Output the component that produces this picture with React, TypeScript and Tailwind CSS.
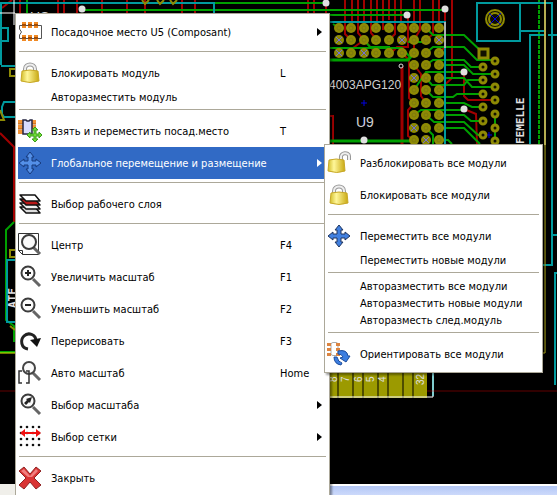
import type { ReactNode } from "react";

const GREEN = "#00a000";
const RED = "#a00000";
const CYAN = "#009a9e";
const OLIVE = "#8e8a04";

const gridCols = [339, 351, 364, 376, 389, 402, 414, 426, 439];
const gridRows = [28, 40, 53];
const sideRows = [65, 78, 90, 103, 115, 128, 140];
const connectorLeft = [67, 80, 94, 107, 121, 135];
const connectorRight = [61, 74, 87, 100, 114, 128, 141];
const crosses = [[339, 40], [339, 53], [364, 53], [402, 40], [439, 40], [414, 78], [414, 128], [426, 140]];
const vias = [[82, 9], [326, 3], [364, 140], [407, 15], [445, 9], [464, 72], [464, 109]];
const topRed = [20, 58, 64, 77, 102, 127, 145, 182, 195, 308, 314, 326, 345, 352, 358, 364, 371, 377, 383];

function Board() {
  return (
    <svg className="absolute left-0 top-0" width="557" height="484" viewBox="0 0 557 484" fill="none" aria-hidden="true">
      <g stroke={RED} strokeWidth="2">
        {topRed.map((x) => <path key={x} d={`M${x} 0V26`} />)}
        <path d="M345 24V34L351 40M358 24V33L364 40M371 24V33L377 40M383 0V30M389 0V20M395 0V34L389 40M401 0V24M408 15V47H397L391 53M414 0V28M420 0V30L414 40V53M433 0V34L426 40M439 0V28M445 9V47L439 53M452 0V78L439 90" />
        <path d="M330 48H353L364 40L376 53M402 53L409 60V98L414 103L408 110V136L414 140M414 65L421 74V96L426 103M464 72V96L468 100H495M464 109L476 114L477 144M330 116H333V144" />
        <path d="M402 66V144" strokeWidth="3" />
        <path d="M2 8L12 0M0 133L14 147V222" />
      </g>
      <g stroke={GREEN} strokeWidth="2">
        <path d="M27 0V13M82 10H445M215 3H326M330 15H407M330 48H402L410 57M414 40L408 42H426M426 28L433 35H464L483 53M426 53L433 47H464L477 60H495M426 65L433 60H464L471 67H483M439 65H464L473 74H495M414 90L426 72H464M426 78L432 85H464L468 80H483M439 78H464L472 87H495M426 90L433 97H453L457 94H483M439 103H464L472 107H483M414 115L421 110H464M439 115H464L471 121H483M426 115L434 122H464L478 135H483M439 128H464L480 144M426 128L433 135V144M439 140H448L452 144M495 114V144M333 24L339 28M364 40L370 47H390" />
        <path d="M330 60H408L414 53M330 141H414" strokeWidth="3" />
        <path d="M14 222L6 230V320L14 326V342M0 352H15" />
        <path d="M539 0V144" strokeDasharray="4 1" />
      </g>
      <g stroke={CYAN} strokeWidth="2">
        <path d="M1 65V3H214V13M1 66H15M1 28H8V41H1M15 102H4L2 107V114L4 117H15M15 260H7V322H15" />
        <path d="M330 22H445V144M477 3H520V41H477ZM520 31H544M530 144V35H544M548 35H557M477 3H552V265H543M552 235H557M557 273H555V385" />
        <path d="M433 372V396" />
      </g>
      <path d="M445 22V48" stroke="#a8b0b0" strokeWidth="2" />
      <path d="M545 0V353H541" stroke="#d4cc20" />
      <path d="M545 0V145" stroke="#fff090" />
      <path d="M0 13H15M14 0V25" stroke="#fff" />
      <path d="M0 353H15" stroke="#e8f000" />
      <path d="M0 391H557" stroke="#620000" />
      <g stroke={OLIVE} strokeWidth="2">
        <path d="M10 69H16V76H10ZM10 250H16V257H10Z" />
        <path d="M0 110L4 120H0M10 326L15 330M142 0L145 4L149 0M157 0L160 4L164 0M170 0L173 4L177 0" />
      </g>
      <g fill={OLIVE}>
        {gridRows.map((y) => gridCols.map((x) => <circle key={`${x}-${y}`} cx={x} cy={y} r="5" />))}
        {sideRows.map((y) => gridCols.slice(6).map((x) => <circle key={`${x}-${y}`} cx={x} cy={y} r="5" />))}
      </g>
      <g stroke="#7d7910">
        {gridRows.map((y) => gridCols.map((x) => <circle key={`${x}-${y}`} cx={x} cy={y} r="2" />))}
        {sideRows.map((y) => gridCols.slice(6).map((x) => <circle key={`${x}-${y}`} cx={x} cy={y} r="2" />))}
      </g>
      <g stroke="#7070d8">
        {crosses.map(([x, y]) => <path key={`${x}-${y}`} d={`M${x - 3} ${y - 3}l6 6m0 -6l-6 6`} />)}
      </g>
      <g stroke={OLIVE} strokeWidth="3" fill="#111100">
        <rect x="479" y="49" width="9" height="9" />
        {connectorLeft.map((y) => <circle key={y} cx="483" cy={y} r="3" />)}
        {connectorRight.map((y) => <circle key={y} cx="495" cy={y} r="3" />)}
        <circle cx="495" cy="19" r="9" strokeWidth="2" />
        <circle cx="495" cy="19" r="6" strokeWidth="2" />
      </g>
      <path d="M489 13L501 25M501 13L489 25M361 103H367M364 100V106M364 118V126M487 135H492M489 132V138" stroke="#0000e0" />
      <g fill="#e0e0e0">
        {vias.map(([x, y]) => <circle key={`${x}-${y}`} cx={x} cy={y} r="3.5" />)}
        <circle cx="401" cy="66" r="2" stroke="#ddd" fill="#000" />
      </g>
      <g fill="#d0d0d0" fontFamily="'Liberation Sans', sans-serif">
        <text x="329" y="89" fontSize="12">4003APG120</text>
        <text x="356" y="127" fontSize="14">U9</text>
        <text x="30" y="22" fontSize="14">US</text>
      </g>
      <g fill="#e0e0e0" fontFamily="'DejaVu Sans Mono', monospace" fontWeight="bold">
        <text transform="translate(524 144) rotate(-90)" fontSize="11">FEMELLE</text>
        <text transform="translate(16 308) rotate(-90)" fontSize="11">ATF</text>
      </g>
      <path d="M329 372H427V398H329Z" fill="#9c9a00" />
      <path d="M338 372V398M353 372V398M363 372V398M378 372V398M388 372V398M403 372V398M413 372V398" stroke="#000" />
      <path d="M329 397H433V372" stroke="#fff" />
      <g fill="#e0e0e0" fontFamily="'Liberation Sans', sans-serif" fontSize="10">
        <text transform="translate(337 382) rotate(-90)">8</text>
        <text transform="translate(349 382) rotate(-90)">7</text>
        <text transform="translate(362 382) rotate(-90)">6</text>
        <text transform="translate(374 382) rotate(-90)">5</text>
        <text transform="translate(386 382) rotate(-90)">4</text>
        <text transform="translate(424 385) rotate(-90)">32</text>
      </g>
    </svg>
  );
}

function Icon({ children }: { children: ReactNode }) {
  return (
    <svg width="24" height="24" viewBox="0 0 24 24" fill="none" aria-hidden="true">
      {children}
    </svg>
  );
}

function Footprint() {
  return (
    <Icon>
      <path d="M1.5 5.5H23.5V18.5H1.5V15L3.5 12L1.5 9Z" fill="#fff" stroke="#555" />
      {[4, 10, 16].map((x) => (
        <g key={x}>
          <path d={`M${x} 2h4v6h-4zM${x} 15h4v6h-4z`} fill="#f08a24" />
          <path d={`M${x} 5h4M${x} 18h4`} stroke="#a04c08" strokeWidth="2" />
        </g>
      ))}
    </Icon>
  );
}

function Lock({ open = false }: { open?: boolean }) {
  const shackle = open ? "M14 10V7C13 1 22 1 22 5V9" : "M7 12V8C7 2 17 2 17 8V12";
  return (
    <Icon>
      <defs>
        <linearGradient id="brass" x1="0" x2="1" y1="0" y2="0">
          <stop offset="0" stopColor="#d2bd28" />
          <stop offset="0.35" stopColor="#fff79a" />
          <stop offset="1" stopColor="#c8a810" />
        </linearGradient>
      </defs>
      <path d={shackle} stroke="#999" strokeWidth="4" />
      <path d={shackle} stroke="#eee" strokeWidth="2" />
      {open
        ? <path d="M2 9Q9 7 17 9L18 20Q10 23 1 20Z" fill="url(#brass)" stroke="#c8a828" />
        : <path d="M4 10Q12 8 20 10L21 20Q12 23 3 20Z" fill="url(#brass)" stroke="#c8a828" />}
    </Icon>
  );
}

const ARROWS = "M12 1L16 6H14V10H18V8L23 12L18 16V14H14V18H16L12 23L8 18H10V14H6V16L1 12L6 8V10H10V6H8Z";

function MoveAll({ muted = false }: { muted?: boolean }) {
  return (
    <Icon>
      <path d={ARROWS} fill={muted ? "#5490e8" : "#4180e0"} stroke={muted ? "#173a7c" : "#20355f"} strokeLinejoin="round" />
    </Icon>
  );
}

function MoveFootprint() {
  return (
    <Icon>
      <path d="M0 1H5V5H0ZM0 6H5V10H0ZM0 11H5V15H0ZM13 1H18V5H13ZM13 6H18V10H13Z" fill="#f39436" />
      <path d="M0 5H5M0 10H5M13 5H18" stroke="#b55c10" />
      <path d="M5 1H8L9 2H11L12 1H14V15H5Z" fill="#d8dcff" stroke="#252540" strokeWidth="1.5" />
      <path d="M17 8L20 11H18V15H21V13L24 16L21 19V17H18V20H20L17 23L14 20H16V17H12V19L9 16L12 13V15H16V11H14Z" fill="#6fdc38" stroke="#3a9c18" />
    </Icon>
  );
}

function Layers() {
  return (
    <Icon>
      <g stroke="#111" strokeWidth="1.5" strokeLinejoin="round">
        <path d="M2 15H17L22 21H8Z" fill="#ddd" />
        <path d="M2 11H17L22 17H8Z" fill="#eee" />
        <path d="M2 7H17L22 13H8Z" fill="#b81818" />
        <path d="M2 3H17L22 9H8Z" fill="#fff" />
      </g>
    </Icon>
  );
}

function Lens({ children }: { children?: ReactNode }) {
  return (
    <Icon>
      <path d="M15 14L22 21" stroke="#666" strokeWidth="3" />
      <circle cx="10" cy="8" r="6.5" fill="#fbfbfb" stroke="#3c3c3c" strokeWidth="2" />
      {children}
    </Icon>
  );
}

function CenterPage() {
  return (
    <Icon>
      <path d="M0.5 0.5H20.5V21.5H4.5L0.5 17.5ZM0.5 17.5H4.5V21.5" fill="#fff" stroke="#333" />
      <path d="M15 14L22 21" stroke="#666" strokeWidth="3" />
      <circle cx="11" cy="9" r="7" fill="#fafafa" stroke="#3c3c3c" strokeWidth="2" />
    </Icon>
  );
}

function Redraw() {
  return (
    <Icon>
      <path d="M10 20C3 19 2 11 6 7C10 3 18 5 18 12" stroke="#222" strokeWidth="3" />
      <path d="M12 11L23 9L19 18Z" fill="#111" />
    </Icon>
  );
}

function FitZoom() {
  return (
    <Icon>
      <path d="M15 12L22 19" stroke="#666" strokeWidth="3" />
      <circle cx="11" cy="7" r="6" fill="#fbfbfb" stroke="#444" strokeWidth="2" />
      <path d="M4 10H1V22H4M8 10H11V22H8" stroke="#333" strokeWidth="1.5" />
    </Icon>
  );
}

function GridIcon() {
  return (
    <Icon>
      {[2, 8, 14, 20].map((y) => [3, 9, 15, 21].map((x) => <circle key={`${x}-${y}`} cx={x} cy={y} r="1.3" fill="#111" />))}
      <path d="M6 8H19" stroke="#f01010" strokeWidth="2" />
      <path d="M7 4V12L2 8ZM18 4V12L23 8Z" fill="#f01010" />
    </Icon>
  );
}

function Close() {
  return (
    <Icon>
      <path d="M6 1L12 8L18 1L23 5L16 12L23 19L18 23L12 16L6 23L1 19L8 12L1 5Z" fill="#d93434" stroke="#8f2424" strokeLinejoin="round" />
      <path d="M6 3L12 10L18 3L20 5L14 11H10L3 5Z" fill="#f08080" />
    </Icon>
  );
}

function Orient() {
  return (
    <Icon>
      <rect x="4" y="0.5" width="7" height="13" rx="2" fill="#fff" stroke="#aaa" />
      <path d="M0 1H4V4H0ZM0 6H4V9H0ZM0 11H4V14H0ZM9 1H13V4H9ZM9 6H13V9H9ZM9 11H13V14H9Z" fill="#dc8440" />
      <path d="M11 9Q20 7 21 14H23L19 20L13 16L16 15Q15 12 11 12Z" fill="#3c7ee0" stroke="#1c4c9c" />
      <path d="M14 23Q7 22 7 15L10 15Q11 20 15 21Z" fill="#3c7ee0" stroke="#1c4c9c" />
    </Icon>
  );
}

type ItemProps = {
  label: string;
  icon?: ReactNode;
  hotkey?: string;
  submenu?: boolean;
  active?: boolean;
};

function Item({ label, icon, hotkey, submenu, active }: ItemProps) {
  return (
    <button
      type="button"
      role="menuitem"
      aria-haspopup={submenu ? "menu" : undefined}
      aria-expanded={active}
      className={`flex w-full shrink-0 items-center whitespace-nowrap text-left ${icon ? "h-8" : "h-[17px]"} ${active ? "bg-[#316ac5] text-white" : "text-black"}`}
    >
      <span className="mr-[9px] w-6 shrink-0">{icon}</span>
      <span className="flex-1">{label}</span>
      {hotkey && <span className="w-[47px] shrink-0">{hotkey}</span>}
      {submenu && (
        <svg className="mr-[5px] shrink-0" width="5" height="8" viewBox="0 0 5 8" aria-hidden="true">
          <path d="M0 0L5 4L0 8Z" fill="currentColor" />
        </svg>
      )}
    </button>
  );
}

function Separator() {
  return <hr className="mx-px mb-[5px] mt-[3px] shrink-0 border-t border-[#aca899]" />;
}

const menuBox =
  "absolute flex flex-col border border-[#aca899] bg-white p-[2px] font-['DejaVu_Sans_Condensed','Noto_Sans',sans-serif] text-[11px] leading-[17px] shadow-[2px_2px_2px_#00000066]";

export default function App() {
  return (
    <main className="relative flex min-h-screen flex-col overflow-hidden bg-black">
      <Board />
      <div className="flex-1" />
      <footer className="relative flex h-[11px]">
        <div className="w-4 bg-[#f0efea]" />
        <div className="flex-1 border-t-2 border-white bg-linear-to-b from-[#b4c8f6] to-[#ccd9fb]" />
      </footer>

      <div role="menu" aria-label="Посадочное место" className={`${menuBox} left-[15px] top-[13px] w-[315px]`}>
        <Item icon={<Footprint />} label="Посадочное место U5 (Composant)" submenu />
        <Separator />
        <Item icon={<Lock />} label="Блокировать модуль" hotkey="L" />
        <Item label="Авторазместить модуль" />
        <Separator />
        <Item icon={<MoveFootprint />} label="Взять и переместить посад.место" hotkey="T" />
        <Item icon={<MoveAll muted />} label="Глобальное перемещение и размещение" submenu active />
        <Separator />
        <Item icon={<Layers />} label="Выбор рабочего слоя" />
        <Separator />
        <Item icon={<CenterPage />} label="Центр" hotkey="F4" />
        <Item icon={<Lens><path d="M7 8H13M10 5V11" stroke="#222" strokeWidth="2" /></Lens>} label="Увеличить масштаб" hotkey="F1" />
        <Item icon={<Lens><path d="M7 8H13" stroke="#222" strokeWidth="2" /></Lens>} label="Уменьшить масштаб" hotkey="F2" />
        <Item icon={<Redraw />} label="Перерисовать" hotkey="F3" />
        <Item icon={<FitZoom />} label="Авто масштаб" hotkey="Home" />
        <Item icon={<Lens><path d="M14 4L12 10L11 9L8 12L6 10L9 7L8 6Z" fill="#222" /></Lens>} label="Выбор масштаба" submenu />
        <Item icon={<GridIcon />} label="Выбор сетки" submenu />
        <Separator />
        <Item icon={<Close />} label="Закрыть" />
      </div>

      <div role="menu" aria-label="Глобальное перемещение и размещение" className={`${menuBox} left-[324px] top-[144px] w-[219px]`}>
        <Item icon={<Lock open />} label="Разблокировать все модули" />
        <Item icon={<Lock />} label="Блокировать все модули" />
        <Separator />
        <Item icon={<MoveAll />} label="Переместить все модули" />
        <Item label="Переместить новые модули" />
        <Separator />
        <Item label="Авторазместить все модули" />
        <Item label="Авторазместить новые модули" />
        <Item label="Авторазместь след.модуль" />
        <Separator />
        <Item icon={<Orient />} label="Ориентировать все модули" />
      </div>
    </main>
  );
}
